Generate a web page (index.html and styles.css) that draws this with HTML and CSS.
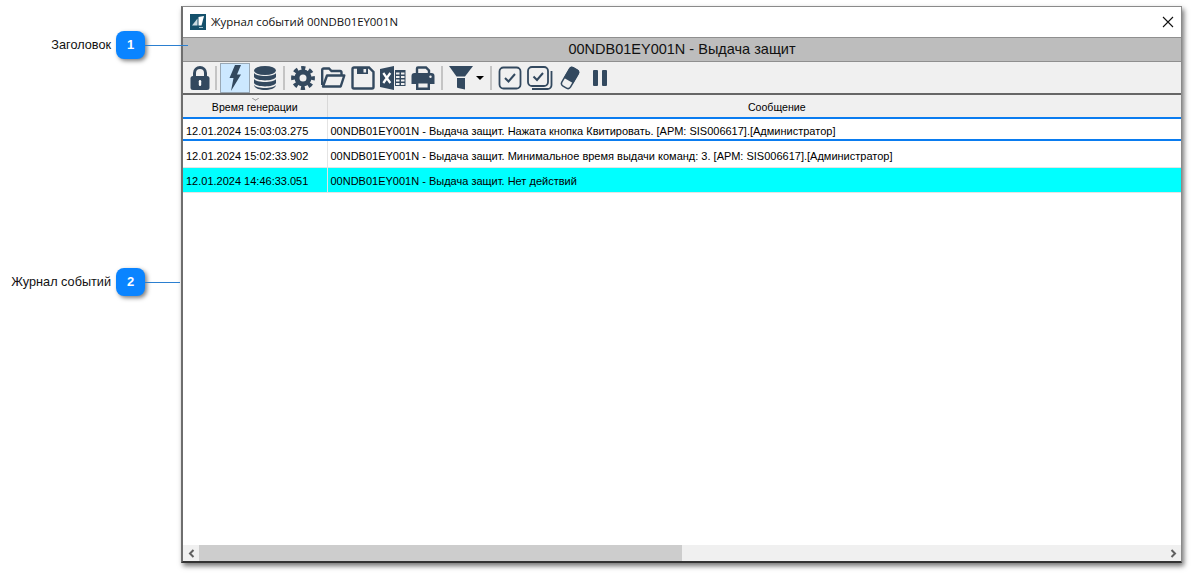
FILE: index.html
```html
<!DOCTYPE html>
<html>
<head>
    <title>Журнал событий</title>
    <link rel="stylesheet" href="styles.css">
</head>
<body>
    <div class="callout callout-title">
        <span class="callout-label">Заголовок</span>
        <span class="badge">1</span>
        <span class="callout-line"></span>
    </div>
    <div class="callout callout-log">
        <span class="callout-label">Журнал событий</span>
        <span class="badge">2</span>
        <span class="callout-line"></span>
    </div>

    <div class="window">
        <div class="titlebar">
            <svg class="logo" width="16" height="16" viewBox="0 0 16 16">
                <rect width="16" height="16" fill="#14506b"/>
                <path d="M2 11.5 L7.5 4.5 V11.5 Z" fill="#c9dae1"/>
                <path d="M8.5 11.5 V3 L14 2 L11.5 11.5 Z" fill="#fff"/>
                <rect x="9" y="13" width="4" height="1" fill="#9fc0cd"/>
            </svg>
            <span class="window-title">Журнал событий 00NDB01EY001N</span>
            <svg class="close" width="12" height="12" viewBox="0 0 12 12">
                <path d="M1 1 L11 11 M11 1 L1 11" stroke="#111" stroke-width="1.1" fill="none"/>
            </svg>
        </div>
        <div class="header-bar">00NDB01EY001N - Выдача защит</div>
        <div class="toolbar">
            <span class="tool tool-lock">
                <svg width="22" height="26" viewBox="0 0 22 26"><path d="M5.5 12 V8 a5.5 5.5 0 0 1 11 0 V12" fill="none" stroke="#33495f" stroke-width="3"/><rect x="1.5" y="11" width="19" height="14" rx="2.5" fill="#33495f"/><rect x="9.8" y="15" width="2.4" height="6" rx="1.2" fill="#fff"/></svg>
            </span>
            <span class="sep"></span>
            <span class="tool tool-active">
                <svg width="14" height="28" viewBox="0 0 14 28"><path d="M7 1 L13 1 L9 10.5 L13 10.5 L3 27 L5.5 14 L1.5 14 Z" fill="#33495f"/></svg>
            </span>
            <span class="tool">
                <svg width="24" height="26" viewBox="0 0 24 26"><g fill="#33495f"><ellipse cx="12" cy="5.5" rx="11" ry="4.5"/><path d="M1 8 C3 12 21 12 23 8 V12 C21 16.5 3 16.5 1 12 Z"/><path d="M1 14 C3 18 21 18 23 14 V18 C21 22.5 3 22.5 1 18 Z"/><path d="M1 20 C3 24 21 24 23 20 V20.5 C21 26.5 3 26.5 1 20.5 Z"/></g></svg>
            </span>
            <span class="sep"></span>
            <span class="tool">
                <svg width="24" height="24" viewBox="0 0 24 24"><circle cx="12" cy="12" r="6" fill="none" stroke="#33495f" stroke-width="5"/><circle cx="12" cy="12" r="9.6" fill="none" stroke="#33495f" stroke-width="4.6" stroke-dasharray="4 3.54" stroke-dashoffset="2"/></svg>
            </span>
            <span class="tool">
                <svg width="25" height="21" viewBox="0 0 25 21"><path d="M1.2 18 V3 a1.5 1.5 0 0 1 1.5 -1.5 H8 L10.5 4 H19 a1.5 1.5 0 0 1 1.5 1.5 V8" fill="none" stroke="#33495f" stroke-width="2.4"/><path d="M6 8.5 H23.3 L19.7 19.5 H2 Z" fill="none" stroke="#33495f" stroke-width="2.4" stroke-linejoin="round"/></svg>
            </span>
            <span class="tool">
                <svg width="24" height="24" viewBox="0 0 24 24"><path d="M1.5 3 a1.5 1.5 0 0 1 1.5 -1.5 H18 L22.5 6 V21 a1.5 1.5 0 0 1 -1.5 1.5 H3 a1.5 1.5 0 0 1 -1.5 -1.5 Z" fill="none" stroke="#33495f" stroke-width="2.4"/><path d="M6 2 H17 V8 H6 Z" fill="#33495f"/><rect x="12.5" y="3" width="2.6" height="3.5" fill="#f0f0f0"/></svg>
            </span>
            <span class="tool">
                <svg width="26" height="24" viewBox="0 0 26 24"><path d="M0 3 L14 0 V24 L0 21 Z" fill="#33495f"/><path d="M3.3 7 L10.3 17 M10.3 7 L3.3 17" stroke="#fff" stroke-width="2.2" fill="none"/><g fill="#33495f"><rect x="15" y="4" width="10.5" height="16" /></g><g fill="#f0f0f0"><rect x="16" y="6.5" width="3.5" height="2"/><rect x="21" y="6.5" width="3.5" height="2"/><rect x="16" y="10" width="3.5" height="2"/><rect x="21" y="10" width="3.5" height="2"/><rect x="16" y="13.5" width="3.5" height="2"/><rect x="21" y="13.5" width="3.5" height="2"/><rect x="16" y="17" width="3.5" height="2"/><rect x="21" y="17" width="3.5" height="2"/></g></svg>
            </span>
            <span class="tool">
                <svg width="24" height="24" viewBox="0 0 24 24"><path d="M6 8 V2.5 a1 1 0 0 1 1 -1 H15 L18 4.5 V8" fill="none" stroke="#33495f" stroke-width="2.4"/><path d="M0.5 10 a3 3 0 0 1 3 -3 H20.5 a3 3 0 0 1 3 3 V18 H19 V15 H5 V18 H0.5 Z" fill="#33495f"/><path d="M6.2 16.2 H17.8 V22.8 H6.2 Z" fill="none" stroke="#33495f" stroke-width="2.4"/><circle cx="19.5" cy="10.8" r="1.2" fill="#f0f0f0"/></svg>
            </span>
            <span class="sep"></span>
            <span class="tool tool-filter">
                <svg width="24" height="24" viewBox="0 0 24 24"><path d="M0 0 H24 L16 10.5 H7.5 Z" fill="#33495f"/><path d="M8 12 H16 V23.5 L9 22 a1 1 0 0 1 -1 -1 Z" fill="#33495f"/></svg>
                <span class="caret"></span>
            </span>
            <span class="sep"></span>
            <span class="tool">
                <svg width="24" height="24" viewBox="0 0 24 24"><rect x="1.5" y="1.5" width="21" height="21" rx="4" fill="none" stroke="#33495f" stroke-width="1.8"/><path d="M7 12 L10.5 15.5 L17 8" fill="none" stroke="#33495f" stroke-width="2"/></svg>
            </span>
            <span class="tool">
                <svg width="26" height="24" viewBox="0 0 26 24"><rect x="1" y="1" width="20" height="19" rx="4" fill="none" stroke="#33495f" stroke-width="1.8"/><path d="M6.5 10.5 L10 14 L16 7" fill="none" stroke="#33495f" stroke-width="2"/><path d="M24.5 5 V19 a4 4 0 0 1 -4 4 H5" fill="none" stroke="#33495f" stroke-width="1.8"/></svg>
            </span>
            <span class="tool">
                <svg width="20" height="24" viewBox="0 0 20 24"><g transform="rotate(30 10 12)"><rect x="5" y="1.5" width="10" height="21" rx="3" fill="none" stroke="#33495f" stroke-width="1.5"/><path d="M4.5 15 V4 a3 3 0 0 1 3 -3 H12.5 a3 3 0 0 1 3 3 V15 Z" fill="#33495f"/></g></svg>
            </span>
            <span class="tool">
                <svg width="14" height="16" viewBox="0 0 14 16"><rect x="0" y="0" width="5" height="16" rx="1" fill="#33495f"/><rect x="9" y="0" width="5" height="16" rx="1" fill="#33495f"/></svg>
            </span>
        </div>
        <div class="log">
            <table class="log-table">
                <thead>
                    <tr>
                        <th class="col-time"><span class="sort-mark"></span>Время генерации</th>
                        <th class="col-msg">Сообщение</th>
                    </tr>
                </thead>
                <tbody>
                    <tr class="row-selected">
                        <td>12.01.2024 15:03:03.275</td>
                        <td>00NDB01EY001N - Выдача защит. Нажата кнопка Квитировать. [АРМ: SIS006617].[Администратор]</td>
                    </tr>
                    <tr class="row-plain">
                        <td>12.01.2024 15:02:33.902</td>
                        <td>00NDB01EY001N - Выдача защит. Минимальное время выдачи команд: 3. [АРМ: SIS006617].[Администратор]</td>
                    </tr>
                    <tr class="row-alarm">
                        <td>12.01.2024 14:46:33.051</td>
                        <td>00NDB01EY001N - Выдача защит. Нет действий</td>
                    </tr>
                </tbody>
            </table>
        </div>
        <div class="scrollbar">
            <span class="scroll-btn">
                <svg width="7" height="9" viewBox="0 0 7 9"><path d="M5.5 1 L2 4.5 L5.5 8" fill="none" stroke="#606060" stroke-width="2"/></svg>
            </span>
            <div class="scroll-track"><div class="scroll-thumb"></div></div>
            <span class="scroll-btn">
                <svg width="7" height="9" viewBox="0 0 7 9"><path d="M1.5 1 L5 4.5 L1.5 8" fill="none" stroke="#606060" stroke-width="2"/></svg>
            </span>
        </div>
    </div>
</body>
</html>
```

FILE: styles.css
```css
html, body {
    margin: 0;
    height: 100%;
    overflow: hidden;
}
body {
    background-color: white;
    font-family: "Liberation Sans", Arial, sans-serif;
    padding: 6px 0 0 181px;
    box-sizing: border-box;
}

/* callouts on the left */
.callout {
    position: absolute;
    left: 0;
    display: flex;
    align-items: center;
    z-index: 2;
}
.callout-title {
    top: 31px;
}
.callout-log {
    top: 268px;
}
.callout-label {
    width: 111px;
    text-align: right;
    font-size: 12.7px;
    color: #111;
    margin-right: 5px;
}
.badge {
    width: 29px;
    height: 28px;
    border-radius: 8px;
    background-color: #0a84ff;
    color: white;
    font-size: 13px;
    font-weight: bold;
    text-align: center;
    line-height: 28px;
    box-shadow: 2px 2px 4px rgba(0, 0, 0, 0.5);
}
.callout-line {
    height: 1px;
    background-color: #2b7fd0;
}
.callout-title .callout-line {
    width: 43px;
}
.callout-log .callout-line {
    width: 35px;
}

/* window */
.window {
    width: 1001px;
    height: 557px;
    box-sizing: border-box;
    border: 1px solid #8a8a8a;
    border-left: 2px solid #6e6e6e;
    border-bottom: 2px solid #333;
    background-color: white;
    box-shadow: 2px 3px 5px rgba(0, 0, 0, 0.55);
    display: flex;
    flex-direction: column;
}
.titlebar {
    height: 30px;
    box-sizing: border-box;
    padding: 0 0 1px 7px;
    display: flex;
    align-items: center;
    flex-shrink: 0;
}
.logo {
    margin-right: 5px;
}
.window-title {
    font-family: "Open Sans", sans-serif;
    font-size: 11.4px;
    color: #111;
    flex: 1;
}
.close {
    margin-right: 7px;
}
.header-bar {
    height: 23px;
    line-height: 23px;
    background-color: #bdbdbd;
    border-top: 1px solid #8f8f8f;
    border-bottom: 1px solid #8f8f8f;
    text-align: center;
    font-size: 14.5px;
    color: #111;
    flex-shrink: 0;
}

/* toolbar */
.toolbar {
    height: 31px;
    background-color: #f0f0f0;
    border-bottom: 2px solid #666;
    padding-left: 5px;
    display: flex;
    align-items: center;
    flex-shrink: 0;
}
.tool {
    width: 30px;
    height: 30px;
    box-sizing: border-box;
    display: flex;
    align-items: center;
    justify-content: center;
    flex-shrink: 0;
}
.tool-lock {
    width: 24px;
}
.tool-active {
    background-color: #cce8ff;
    border: 1px solid #99a8b5;
}
.tool-filter {
    width: 41px;
    justify-content: flex-start;
    padding-left: 3px;
}
.caret {
    width: 0;
    height: 0;
    margin-left: 3px;
    border-left: 4px solid transparent;
    border-right: 4px solid transparent;
    border-top: 4px solid black;
}
.sep {
    width: 2px;
    height: 24px;
    margin: 0 3px;
    background-color: #c4c4c4;
    flex-shrink: 0;
}

/* log table */
.log {
    flex: 1;
    overflow: hidden;
    background-color: white;
}
.log-table {
    table-layout: fixed;
    width: 1044px;
    border-collapse: collapse;
    font-size: 11px;
    color: black;
}
.col-time {
    width: 144px;
}
.log-table th {
    position: relative;
    height: 23px;
    padding: 2px 0 0;
    box-sizing: border-box;
    font-size: 10.6px;
    font-weight: normal;
    background-color: #f0f0f0;
    border-right: 1px solid #d8d8d8;
}
.sort-mark {
    position: absolute;
    top: 1px;
    left: 70px;
    width: 4px;
    height: 4px;
    border-right: 1px solid #888;
    border-bottom: 1px solid #888;
    transform: scaleY(0.6) rotate(45deg);
}
.log-table td {
    padding: 2px 3px 0;
    white-space: nowrap;
    border-right: 1px solid #e4e4e4;
    border-bottom: 1px solid #e4e4e4;
}
.row-selected td {
    padding-top: 4px;
    border-top: 2px solid #0a7cf0;
    border-bottom: 2px solid #0a7cf0;
    height: 16px;
}
.row-plain td {
    padding-top: 3px;
    height: 23px;
}
.row-alarm td {
    height: 22px;
    background-color: aqua;
}

/* horizontal scrollbar */
.scrollbar {
    height: 16px;
    display: flex;
    background-color: #f0f0f0;
    flex-shrink: 0;
}
.scroll-btn {
    width: 16px;
    display: flex;
    align-items: center;
    justify-content: center;
    flex-shrink: 0;
}
.scroll-track {
    flex: 1;
}
.scroll-thumb {
    width: 50%;
    height: 100%;
    background-color: #cdcdcd;
}
```
